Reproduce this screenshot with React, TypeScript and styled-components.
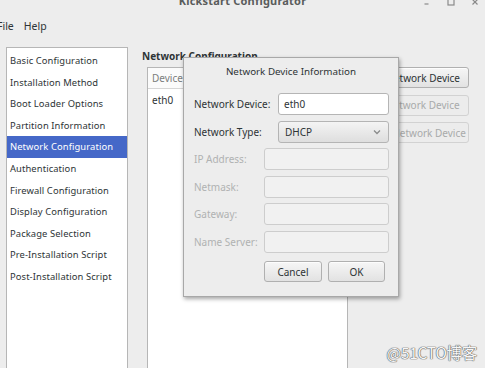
import React from 'react'
import styled, {createGlobalStyle, css} from 'styled-components'

const GlobalStyle = createGlobalStyle`
  html, body {
    margin: 0;
    padding: 0;
    background: #ededed;
    width: 485px;
    height: 368px;
    overflow: hidden;
  }
  * {
    box-sizing: border-box;
  }
`

const fontStack = `"Noto Sans", "Open Sans", sans-serif`

const Window = styled.div`
  position: relative;
  width: 485px;
  height: 368px;
  overflow: hidden;
  background: #ededed;
  font-family: ${fontStack};
  font-size: 10px;
  color: #2e3436;
`

const TitleBar = styled.div`
  height: 12px;
  position: relative;
  display: flex;
  justify-content: center;
  overflow: hidden;
`

const TitleText = styled.div`
  margin-top: -7px;
  font-size: 11px;
  font-weight: 700;
  color: #5a5c5c;
  letter-spacing: 0.2px;
`

const WindowControls = styled.div`
  position: absolute;
  right: 6px;
  top: -2px;
  display: flex;
  gap: 16px;
  align-items: center;
  color: #8a8a8a;
`

const MenuBar = styled.div`
  height: 26px;
  display: flex;
  align-items: center;
  gap: 10px;
  margin-left: -3px;
  font-size: 10.5px;
  padding-top: 2px;
`

const Content = styled.div`
  display: flex;
  padding: 9px 0 0 6px;
  height: 400px;
`

const Sidebar = styled.div`
  width: 122px;
  flex: none;
  background: #fff;
  border: 1px solid #b6b6b6;
  padding-top: 2px;
  display: flex;
  flex-direction: column;
`

const SidebarItem = styled.div<{$selected?: boolean}>`
  height: 21.6px;
  line-height: 21.6px;
  padding-left: 3px;
  white-space: nowrap;
  font-size: 9.4px;
  letter-spacing: 0.1px;
  ${(p) =>
    p.$selected
      ? css`
          background: #4568c8;
          color: #fff;
        `
      : css`
          color: #2e3436;
        `}
`

const RightPanel = styled.div`
  flex: 1;
  padding-left: 14px;
  display: flex;
  flex-direction: column;
`

const SectionHeader = styled.div`
  font-weight: 700;
  font-size: 10px;
  height: 12px;
  line-height: 12px;
  margin: 3px 0 5px;
`

const DevicesRow = styled.div`
  display: flex;
  gap: 8px;
  padding-left: 5px;
  padding-right: 16px;
  flex: 1;
`

const DeviceTable = styled.div`
  width: 201px;
  background: #fff;
  border: 1px solid #b6b6b6;
`

const TableHeader = styled.div`
  height: 21px;
  line-height: 20px;
  padding-left: 4px;
  color: #7a7d7d;
  border-bottom: 1px solid #d6d6d6;
  background: #fbfbfb;
`

const TableCell = styled.div`
  height: 24px;
  line-height: 22px;
  padding-left: 4px;
`

const ButtonColumn = styled.div`
  flex: 1;
  display: flex;
  flex-direction: column;
  gap: 6.5px;
`

const PushButton = styled.div<{$disabled?: boolean; $width?: number}>`
  height: 21px;
  display: flex;
  align-items: center;
  justify-content: center;
  border-radius: 3px;
  white-space: nowrap;
  font-size: 10px;
  ${(p) =>
    p.$width
      ? css`
          width: ${p.$width}px;
        `
      : ''}
  ${(p) =>
    p.$disabled
      ? css`
          color: #a8aaaa;
          border: 1px solid #d2d2d2;
          background: #ececec;
        `
      : css`
          color: #2e3436;
          border: 1px solid #b0b0b0;
          background: linear-gradient(#f6f6f6, #e2e2e2);
          box-shadow: 0 1px 0 rgba(255, 255, 255, 0.8) inset;
        `}
`

const Dialog = styled.div`
  position: absolute;
  left: 183px;
  top: 57px;
  width: 216px;
  height: 240px;
  background: #ededed;
  border: 1px solid #a8a8a8;
  box-shadow: 1px 2px 4px rgba(0, 0, 0, 0.35);
  display: flex;
  flex-direction: column;
`

const DialogTitle = styled.div`
  height: 28px;
  display: flex;
  align-items: center;
  justify-content: center;
  padding-bottom: 1px;
  color: #2e3436;
  font-size: 9.8px;
`

const Form = styled.div`
  display: flex;
  flex-direction: column;
  gap: 5.5px;
  padding: 7px 9px 0 9px;
`

const FieldRow = styled.div`
  display: flex;
  align-items: center;
  height: 22px;
`

const FieldLabel = styled.div<{$disabled?: boolean; $width: number}>`
  width: ${(p) => p.$width}px;
  flex: none;
  padding-left: 1px;
  font-size: 10px;
  white-space: nowrap;
  color: ${(p) => (p.$disabled ? '#b0b2b2' : '#2e3436')};
`

const Entry = styled.div<{$disabled?: boolean}>`
  flex: 1;
  height: 22px;
  border-radius: 3px;
  display: flex;
  align-items: center;
  padding-left: 5px;
  ${(p) =>
    p.$disabled
      ? css`
          background: #f1f1f1;
          border: 1px solid #cdcdcd;
        `
      : css`
          background: #fff;
          border: 1px solid #b5b5b5;
        `}
`

const Combo = styled.div`
  flex: 1;
  height: 22px;
  border-radius: 3px;
  border: 1px solid #b4b4b4;
  background: linear-gradient(#f4f4f4, #dedede);
  display: flex;
  align-items: center;
  justify-content: space-between;
  padding: 0 7px 0 6px;
`

const DialogButtons = styled.div`
  display: flex;
  justify-content: flex-end;
  gap: 6px;
  margin-top: 3px;
  padding-right: 4px;
`

const Watermark = styled.div`
  position: absolute;
  right: 8px;
  bottom: 7px;
  font-family: "Noto Sans CJK SC", "Noto Sans", sans-serif;
  font-size: 15.5px;
  line-height: 18px;
  color: #f6f6f6;
  text-shadow: 0 0 1px #555, 0 0 1px #555, 0 0 1px #777;
  letter-spacing: -0.3px;
`

const navItems = [
  'Basic Configuration',
  'Installation Method',
  'Boot Loader Options',
  'Partition Information',
  'Network Configuration',
  'Authentication',
  'Firewall Configuration',
  'Display Configuration',
  'Package Selection',
  'Pre-Installation Script',
  'Post-Installation Script',
]

const Chevron = () => (
  <svg width="8" height="6" viewBox="0 0 8 6">
    <path d="M1 1.5 L4 4.5 L7 1.5" fill="none" stroke="#8a8c8c" strokeWidth="1.3" />
  </svg>
)

const App: React.FC = () => {
  return (
    <Window>
      <GlobalStyle />
      <TitleBar>
        <TitleText>Kickstart Configurator</TitleText>
        <WindowControls>
          <svg width="8" height="8" viewBox="0 0 8 8">
            <path d="M1.5 6 H5.5" stroke="#8a8a8a" strokeWidth="1.2" />
          </svg>
          <svg width="8" height="8" viewBox="0 0 8 8">
            <rect x="1" y="1" width="6" height="6" fill="none" stroke="#8a8a8a" strokeWidth="1.2" />
          </svg>
          <svg width="8" height="8" viewBox="0 0 8 8">
            <path d="M1.5 1.5 L6.5 6.5 M6.5 1.5 L1.5 6.5" stroke="#8a8a8a" strokeWidth="1.2" />
          </svg>
        </WindowControls>
      </TitleBar>
      <MenuBar>
        <span>File</span>
        <span>Help</span>
      </MenuBar>
      <Content>
        <Sidebar>
          {navItems.map((item) => (
            <SidebarItem key={item} $selected={item === 'Network Configuration'}>
              {item}
            </SidebarItem>
          ))}
        </Sidebar>
        <RightPanel>
          <SectionHeader>Network Configuration</SectionHeader>
          <DevicesRow>
            <DeviceTable>
              <TableHeader>Device</TableHeader>
              <TableCell>eth0</TableCell>
            </DeviceTable>
            <ButtonColumn>
              <PushButton>Add Network Device</PushButton>
              <PushButton $disabled>Edit Network Device</PushButton>
              <PushButton $disabled>Delete Network Device</PushButton>
            </ButtonColumn>
          </DevicesRow>
        </RightPanel>
      </Content>

      <Dialog>
        <DialogTitle>Network Device Information</DialogTitle>
        <Form>
          <FieldRow>
            <FieldLabel $width={85}>Network Device:</FieldLabel>
            <Entry>eth0</Entry>
          </FieldRow>
          <FieldRow>
            <FieldLabel $width={85}>Network Type:</FieldLabel>
            <Combo>
              <span>DHCP</span>
              <Chevron />
            </Combo>
          </FieldRow>
          <FieldRow>
            <FieldLabel $width={71} $disabled>IP Address:</FieldLabel>
            <Entry $disabled />
          </FieldRow>
          <FieldRow>
            <FieldLabel $width={71} $disabled>Netmask:</FieldLabel>
            <Entry $disabled />
          </FieldRow>
          <FieldRow>
            <FieldLabel $width={71} $disabled>Gateway:</FieldLabel>
            <Entry $disabled />
          </FieldRow>
          <FieldRow>
            <FieldLabel $width={71} $disabled>Name Server:</FieldLabel>
            <Entry $disabled />
          </FieldRow>
          <DialogButtons>
            <PushButton $width={58}>Cancel</PushButton>
            <PushButton $width={57}>OK</PushButton>
          </DialogButtons>
        </Form>
      </Dialog>

      <Watermark>@51CTO博客</Watermark>
    </Window>
  )
}

export default App
